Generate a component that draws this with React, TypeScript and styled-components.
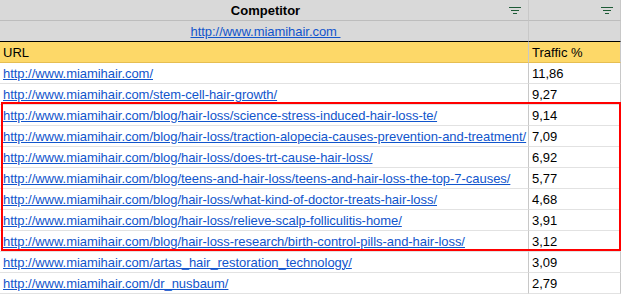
import React from "react";
import styled, { createGlobalStyle } from "styled-components";

const GlobalStyle = createGlobalStyle`
  body {
    margin: 0;
    background: #ffffff;
    font-family: "Liberation Sans", Arial, sans-serif;
  }
`;

const Sheet = styled.div`
  position: relative;
  width: 621px;
  display: grid;
  grid-template-columns: 529px 92px;
  font-size: 13px;
  color: #000;
`;

const Cell = styled.div<{ $bg?: string; $line?: string; $center?: boolean; $bold?: boolean }>`
  height: 20px;
  box-sizing: content-box;
  display: flex;
  align-items: center;
  justify-content: ${(p) => (p.$center ? "center" : "flex-start")};
  padding: 0 0 0 3px;
  background: ${(p) => p.$bg || "#ffffff"};
  border-bottom: 1px solid ${(p) => p.$line || "#e2e2e2"};
  border-right: 1px solid #c8c8c8;
  font-weight: ${(p) => (p.$bold ? "bold" : "normal")};
  white-space: nowrap;
  overflow: hidden;
  position: relative;
`;

const Link = styled.a`
  color: #1155cc;
  text-decoration: underline;
  white-space: pre;
  letter-spacing: -0.04px;
`;

const FilterIcon = styled.svg`
  position: absolute;
  right: 7px;
  top: 6px;
`;

const Highlight = styled.div`
  position: absolute;
  left: 1px;
  top: 102px;
  width: 616px;
  height: 145px;
  border: 2px solid #ff0000;
  pointer-events: none;
`;

const Filter = () => (
  <FilterIcon width="12" height="9" viewBox="0 0 12 9">
    <rect x="0" y="1" width="12" height="1" fill="#1d5b36" />
    <rect x="2" y="4" width="8" height="1" fill="#1d5b36" />
    <rect x="4" y="7" width="4" height="1" fill="#1d5b36" />
  </FilterIcon>
);

const rows: [string, string][] = [
  ["http://www.miamihair.com/", "11,86"],
  ["http://www.miamihair.com/stem-cell-hair-growth/", "9,27"],
  ["http://www.miamihair.com/blog/hair-loss/science-stress-induced-hair-loss-te/", "9,14"],
  ["http://www.miamihair.com/blog/hair-loss/traction-alopecia-causes-prevention-and-treatment/", "7,09"],
  ["http://www.miamihair.com/blog/hair-loss/does-trt-cause-hair-loss/", "6,92"],
  ["http://www.miamihair.com/blog/teens-and-hair-loss/teens-and-hair-loss-the-top-7-causes/", "5,77"],
  ["http://www.miamihair.com/blog/hair-loss/what-kind-of-doctor-treats-hair-loss/", "4,68"],
  ["http://www.miamihair.com/blog/hair-loss/relieve-scalp-folliculitis-home/", "3,91"],
  ["http://www.miamihair.com/blog/hair-loss-research/birth-control-pills-and-hair-loss/", "3,12"],
  ["http://www.miamihair.com/artas_hair_restoration_technology/", "3,09"],
  ["http://www.miamihair.com/dr_nusbaum/", "2,79"],
];

export default function App() {
  return (
    <>
      <GlobalStyle />
      <Sheet>
        <Cell $bg="#d9d9d9" $line="#bdbdbd" $center $bold>
          Competitor
          <Filter />
        </Cell>
        <Cell $bg="#d9d9d9" $line="#bdbdbd">
          <Filter />
        </Cell>
        <Cell $bg="#d9d9d9" $line="#000000" $center>
          <Link>http://www.miamihair.com </Link>
        </Cell>
        <Cell $bg="#d9d9d9" $line="#000000" />
        <Cell $bg="#fdd868" $line="#e6be52">URL</Cell>
        <Cell $bg="#fdd868" $line="#e6be52">Traffic %</Cell>
        {rows.map(([url, traffic]) => (
          <React.Fragment key={url}>
            <Cell>
              <Link>{url}</Link>
            </Cell>
            <Cell>{traffic}</Cell>
          </React.Fragment>
        ))}
        <Highlight />
      </Sheet>
    </>
  );
}
